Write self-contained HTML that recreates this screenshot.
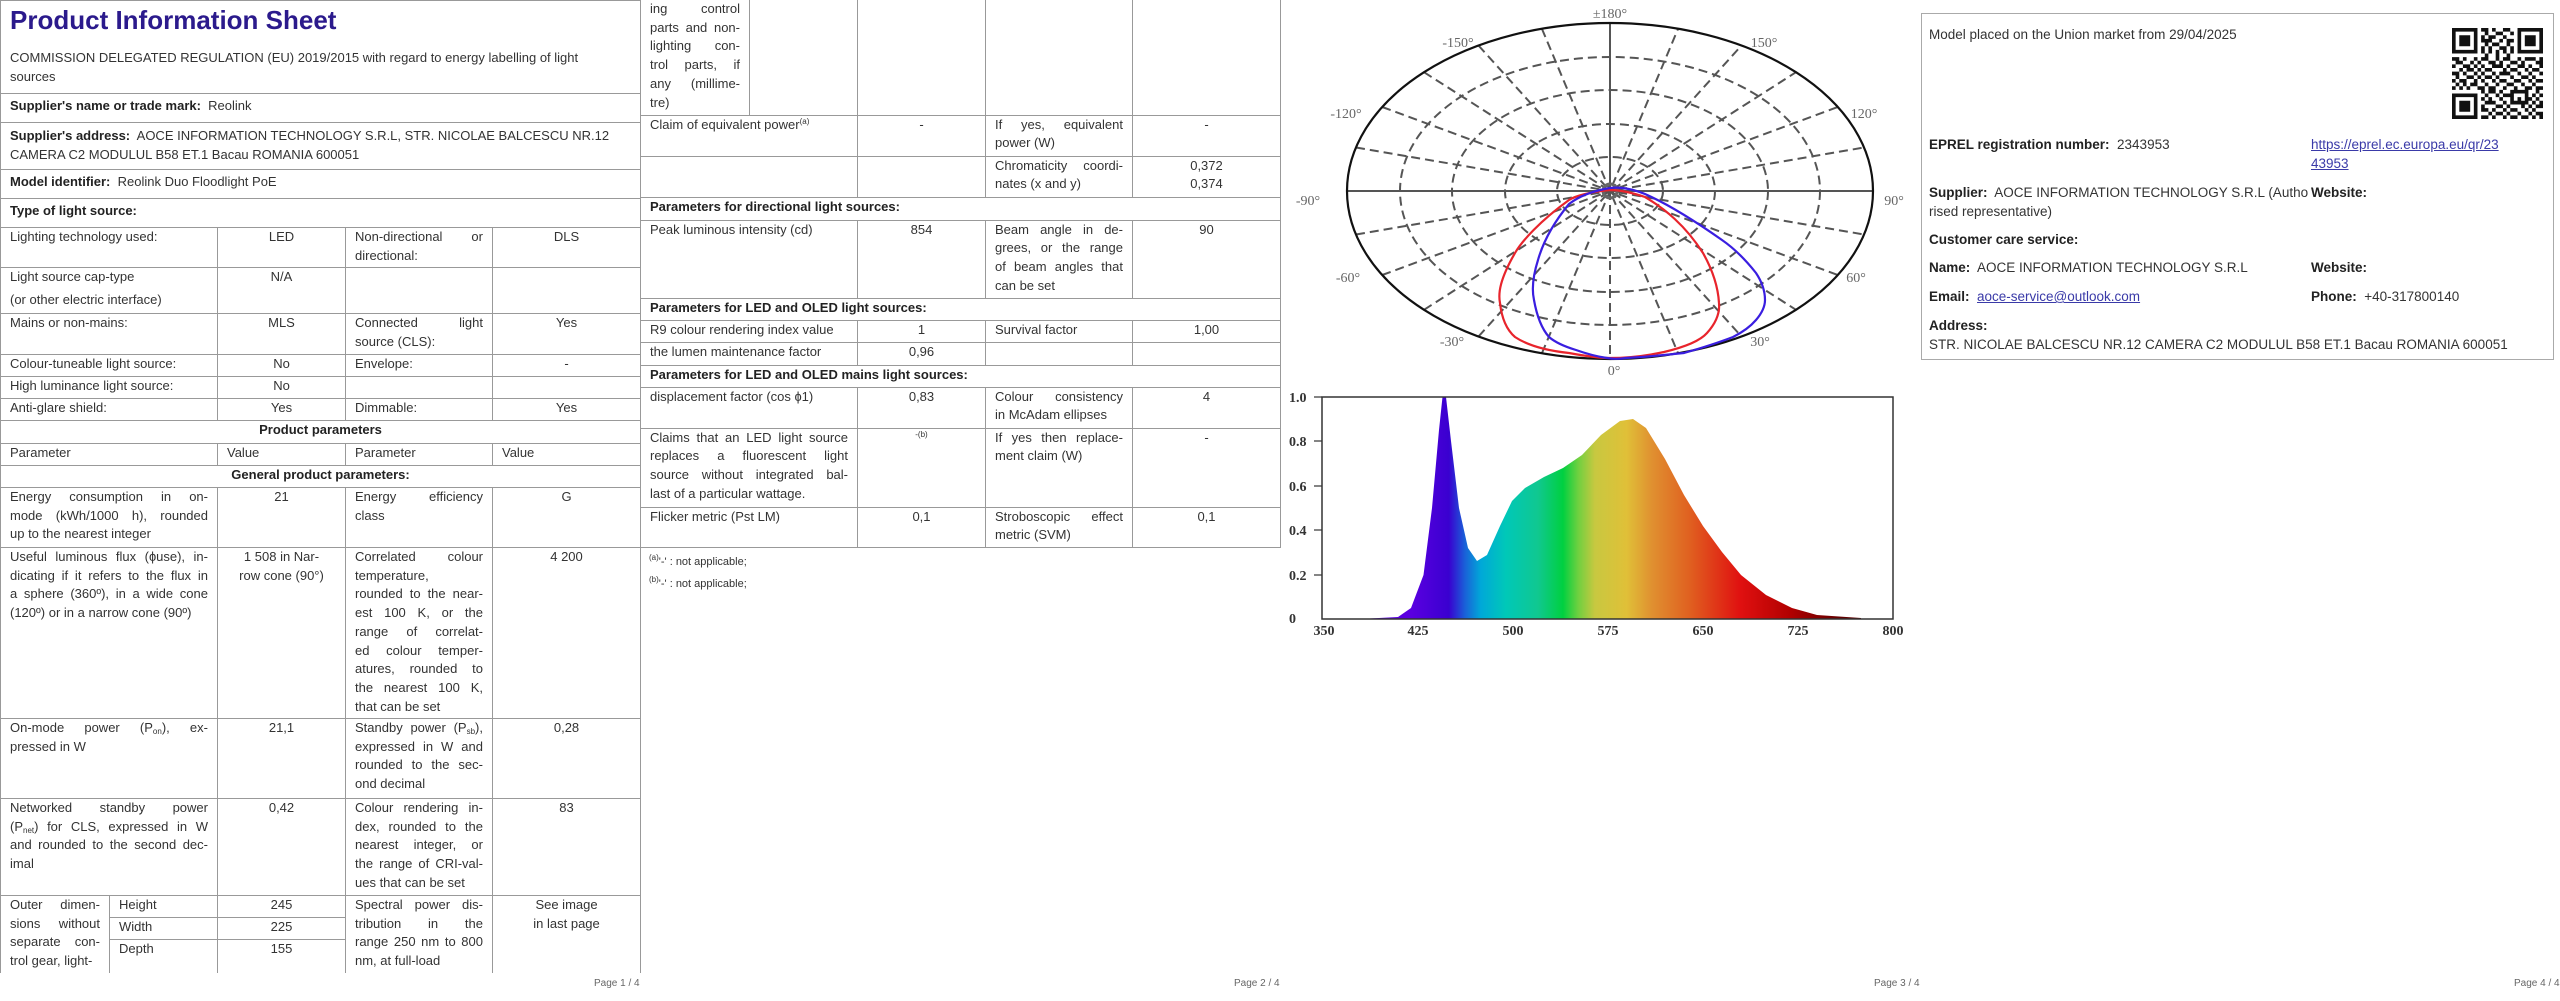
<!DOCTYPE html>
<html><head><meta charset="utf-8">
<style>
*{margin:0;padding:0;box-sizing:border-box}
body{width:2560px;height:1001px;background:#fff;position:relative;overflow:hidden;font-family:"Liberation Sans",sans-serif;color:#333;font-size:13px}
table{position:absolute;border-collapse:collapse;table-layout:fixed;font-size:13px;line-height:18.7px}
td{border:1px solid #999;vertical-align:top;padding:0 9px;overflow:hidden}
.c{text-align:center}
.j{text-align:justify;text-align-last:justify}
b{color:#222}
.h{text-align:center;font-weight:bold;color:#222}
sub{font-size:8px;vertical-align:-2px;line-height:0}
sup{font-size:8px;vertical-align:5px;line-height:0}
.pn{position:absolute;top:978px;font-size:10px;color:#666}
.p4{position:absolute;font-size:13.5px;line-height:19px;color:#333;white-space:nowrap}
a{color:#3a3aa8;text-decoration:underline}
</style></head><body>

<!-- PAGE 1 -->
<table style="left:0;top:0;width:640px">
<colgroup><col style="width:109px"><col style="width:108px"><col style="width:128px"><col style="width:147px"><col style="width:148px"></colgroup>
<tr style="height:93px"><td colspan="5"><div style="font-size:26px;font-weight:bold;color:#2b1a8c;line-height:34px;padding-top:2px">Product Information Sheet</div><div style="padding-top:11px;line-height:19px">COMMISSION DELEGATED REGULATION (EU) 2019/2015 with regard to energy labelling of light<br>sources</div></td></tr>
<tr style="height:29px"><td colspan="5" style="padding-top:3px"><b>Supplier's name or trade mark:</b>&nbsp; Reolink</td></tr>
<tr style="height:47px"><td colspan="5" style="padding-top:3px;line-height:19px"><b>Supplier's address:</b>&nbsp; AOCE INFORMATION TECHNOLOGY S.R.L, STR. NICOLAE BALCESCU NR.12<br>CAMERA C2 MODULUL B58 ET.1 Bacau ROMANIA 600051</td></tr>
<tr style="height:29px"><td colspan="5" style="padding-top:3px"><b>Model identifier:</b>&nbsp; Reolink Duo Floodlight PoE</td></tr>
<tr style="height:29px"><td colspan="5" style="padding-top:3px"><b>Type of light source:</b></td></tr>
<tr style="height:40px"><td colspan="2">Lighting technology used:</td><td class="c">LED</td><td><div class="j">Non-directional or</div>directional:</td><td class="c">DLS</td></tr>
<tr style="height:46px"><td colspan="2">Light source cap-type<div style="margin-top:4px">(or other electric interface)</div></td><td class="c">N/A</td><td></td><td></td></tr>
<tr style="height:41px"><td colspan="2">Mains or non-mains:</td><td class="c">MLS</td><td><div class="j">Connected light</div>source (CLS):</td><td class="c">Yes</td></tr>
<tr style="height:22px"><td colspan="2">Colour-tuneable light source:</td><td class="c">No</td><td>Envelope:</td><td class="c">-</td></tr>
<tr style="height:22px"><td colspan="2">High luminance light source:</td><td class="c">No</td><td></td><td></td></tr>
<tr style="height:22px"><td colspan="2">Anti-glare shield:</td><td class="c">Yes</td><td>Dimmable:</td><td class="c">Yes</td></tr>
<tr style="height:23px"><td colspan="5" class="h">Product parameters</td></tr>
<tr style="height:22px"><td colspan="2">Parameter</td><td>Value</td><td>Parameter</td><td>Value</td></tr>
<tr style="height:22px"><td colspan="5" class="h">General product parameters:</td></tr>
<tr style="height:60px"><td colspan="2"><div class="j">Energy consumption in on-</div><div class="j">mode (kWh/1000 h), rounded</div>up to the nearest integer</td><td class="c">21</td><td><div class="j">Energy efficiency</div>class</td><td class="c">G</td></tr>
<tr style="height:171px"><td colspan="2"><div class="j">Useful luminous flux (ɸuse), in-</div><div class="j">dicating if it refers to the flux in</div><div class="j">a sphere (360º), in a wide cone</div>(120º) or in a narrow cone (90º)</td><td class="c">1 508 in Nar-<br>row cone (90°)</td><td><div class="j">Correlated colour</div>temperature,<div class="j">rounded to the near-</div><div class="j">est 100 K, or the</div><div class="j">range of correlat-</div><div class="j">ed colour temper-</div><div class="j">atures, rounded to</div><div class="j">the nearest 100 K,</div>that can be set</td><td class="c">4 200</td></tr>
<tr style="height:80px"><td colspan="2"><div class="j">On-mode power (P<sub>on</sub>), ex-</div>pressed in W</td><td class="c">21,1</td><td><div class="j">Standby power (P<sub>sb</sub>),</div><div class="j">expressed in W and</div><div class="j">rounded to the sec-</div>ond decimal</td><td class="c">0,28</td></tr>
<tr style="height:97px"><td colspan="2"><div class="j">Networked standby power</div><div class="j">(P<sub>net</sub>) for CLS, expressed in W</div><div class="j">and rounded to the second dec-</div>imal</td><td class="c">0,42</td><td><div class="j">Colour rendering in-</div><div class="j">dex, rounded to the</div><div class="j">nearest integer, or</div><div class="j">the range of CRI-val-</div>ues that can be set</td><td class="c">83</td></tr>
<tr style="height:22px"><td rowspan="3" style="border-bottom:none"><div class="j">Outer dimen-</div><div class="j">sions without</div><div class="j">separate con-</div>trol gear, light-</td><td>Height</td><td class="c">245</td><td rowspan="3" style="border-bottom:none"><div class="j">Spectral power dis-</div><div class="j">tribution in the</div><div class="j">range 250 nm to 800</div>nm, at full-load</td><td rowspan="3" class="c" style="border-bottom:none">See image<br>in last page</td></tr>
<tr style="height:22px"><td>Width</td><td class="c">225</td></tr>
<tr style="height:33px"><td style="border-bottom:none">Depth</td><td class="c" style="border-bottom:none">155</td></tr>
</table>
<div class="pn" style="left:594px">Page 1 / 4</div>

<!-- PAGE 2 -->
<table style="left:640px;top:0;width:640px">
<colgroup><col style="width:109px"><col style="width:108px"><col style="width:128px"><col style="width:147px"><col style="width:148px"></colgroup>
<tr style="height:115px"><td style="border-top:none"><div class="j">ing control</div><div class="j">parts and non-</div><div class="j">lighting con-</div><div class="j">trol parts, if</div><div class="j">any (millime-</div>tre)</td><td style="border-top:none"></td><td style="border-top:none"></td><td style="border-top:none"></td><td style="border-top:none"></td></tr>
<tr style="height:41px"><td colspan="2">Claim of equivalent power<sup>(a)</sup></td><td class="c">-</td><td><div class="j">If yes, equivalent</div>power (W)</td><td class="c">-</td></tr>
<tr style="height:41px"><td colspan="2"></td><td></td><td><div class="j">Chromaticity coordi-</div>nates (x and y)</td><td class="c">0,372<br>0,374</td></tr>
<tr style="height:23px"><td colspan="5"><b>Parameters for directional light sources:</b></td></tr>
<tr style="height:78px"><td colspan="2">Peak luminous intensity (cd)</td><td class="c">854</td><td><div class="j">Beam angle in de-</div><div class="j">grees, or the range</div><div class="j">of beam angles that</div>can be set</td><td class="c">90</td></tr>
<tr style="height:22px"><td colspan="5"><b>Parameters for LED and OLED light sources:</b></td></tr>
<tr style="height:22px"><td colspan="2">R9 colour rendering index value</td><td class="c">1</td><td>Survival factor</td><td class="c">1,00</td></tr>
<tr style="height:23px"><td colspan="2">the lumen maintenance factor</td><td class="c">0,96</td><td></td><td></td></tr>
<tr style="height:22px"><td colspan="5"><b>Parameters for LED and OLED mains light sources:</b></td></tr>
<tr style="height:41px"><td colspan="2">displacement factor (cos ɸ1)</td><td class="c">0,83</td><td><div class="j">Colour consistency</div>in McAdam ellipses</td><td class="c">4</td></tr>
<tr style="height:79px"><td colspan="2"><div class="j">Claims that an LED light source</div><div class="j">replaces a fluorescent light</div><div class="j">source without integrated bal-</div>last of a particular wattage.</td><td class="c"><sup>-(b)</sup></td><td><div class="j">If yes then replace-</div>ment claim (W)</td><td class="c">-</td></tr>
<tr style="height:40px"><td colspan="2">Flicker metric (Pst LM)</td><td class="c">0,1</td><td><div class="j">Stroboscopic effect</div>metric (SVM)</td><td class="c">0,1</td></tr>
</table>
<div style="position:absolute;left:649px;top:551px;font-size:11px;line-height:22px;color:#333"><sup>(a)</sup>'-' : not applicable;<br><sup>(b)</sup>'-' : not applicable;</div>
<div class="pn" style="left:1234px">Page 2 / 4</div>

<!-- PAGE 3 -->
<svg style="position:absolute;left:0;top:0" width="2560" height="1001">
<g transform="translate(1610,191)" fill="none">
<g stroke="#555" stroke-width="2" stroke-dasharray="9 5">
<ellipse rx="210" ry="134"/><ellipse rx="158" ry="101"/><ellipse rx="105" ry="67"/><ellipse rx="53" ry="34"/>
<line x1="-68.1" y1="-162.3" x2="68.1" y2="162.3"/><line x1="-68.1" y1="162.3" x2="68.1" y2="-162.3"/>
<line x1="-131.5" y1="-145.5" x2="131.5" y2="145.5"/><line x1="-131.5" y1="145.5" x2="131.5" y2="-145.5"/>
<line x1="-186" y1="-118.8" x2="186" y2="118.8"/><line x1="-186" y1="118.8" x2="186" y2="-118.8"/>
<line x1="-227.8" y1="-84" x2="227.8" y2="84"/><line x1="-227.8" y1="84" x2="227.8" y2="-84"/>
<line x1="-254" y1="-43.5" x2="254" y2="43.5"/><line x1="-254" y1="43.5" x2="254" y2="-43.5"/>
<line x1="0" y1="0" x2="0" y2="168"/>
</g>
<line x1="0" y1="-168" x2="0" y2="0" stroke="#555" stroke-width="2"/>
<line x1="-263" y1="0" x2="263" y2="0" stroke="#555" stroke-width="2"/>
<circle r="7" stroke="#666" stroke-width="3"/>
<ellipse rx="263" ry="168" stroke="#111" stroke-width="2.2"/>
<path d="M0,-1 C-20,1 -35,5 -41,9 C-70,30 -88,50 -95,62 C-110,88 -112,102 -110,112 C-108,130 -102,140 -95,146 C-80,156 -60,160 -41,162 C-25,165 -10,167 0,167 C20,167 40,164 54,161 C75,156 90,150 97,142 C106,132 110,122 109,112 C108,95 102,78 93,62 C75,34 55,18 35,6 C20,1 10,-1 0,-1Z" stroke="#e8242c" stroke-width="2.2"/>
<path d="M0,-3 C-18,0 -32,6 -41,13 C-60,36 -68,55 -72,69 C-78,88 -78,100 -76,109 C-73,126 -68,138 -61,146 C-54,152 -44,156 -34,159 C-20,164 -10,166 -3,167 C3,168 10,168 16,167 C35,166 55,164 74,162 C95,156 110,151 123,146 C133,141 140,136 146,129 C152,122 155,116 155,109 C155,100 152,91 146,82 C135,68 125,58 112,49 C85,30 60,14 35,3 C20,-3 8,-4 0,-3Z" stroke="#3a1ee0" stroke-width="2.2"/>
</g>
<g font-family="Liberation Serif,serif" font-size="14" fill="#666" text-anchor="middle">
<text x="1610" y="18">±180°</text>
<text x="1458" y="47">-150°</text><text x="1764" y="47">150°</text>
<text x="1346" y="118">-120°</text><text x="1864" y="118">120°</text>
<text x="1308" y="205">-90°</text><text x="1894" y="205">90°</text>
<text x="1348" y="282">-60°</text><text x="1856" y="282">60°</text>
<text x="1452" y="346">-30°</text><text x="1760" y="346">30°</text>
<text x="1614" y="375">0°</text>
</g>
<defs><linearGradient id="sp" gradientUnits="userSpaceOnUse" x1="1322" y1="0" x2="1893" y2="0">
<stop offset="0.156" stop-color="#5a00e0"/><stop offset="0.222" stop-color="#3a00d0"/><stop offset="0.25" stop-color="#1a60d8"/><stop offset="0.278" stop-color="#00a8d8"/><stop offset="0.322" stop-color="#00c8b8"/><stop offset="0.378" stop-color="#10c890"/><stop offset="0.422" stop-color="#00d040"/><stop offset="0.449" stop-color="#70d040"/><stop offset="0.478" stop-color="#c8c840"/><stop offset="0.533" stop-color="#e0c038"/><stop offset="0.578" stop-color="#e09030"/><stop offset="0.644" stop-color="#e06020"/><stop offset="0.733" stop-color="#e01010"/><stop offset="0.822" stop-color="#b00000"/><stop offset="0.911" stop-color="#600000"/></linearGradient></defs>
<path fill="url(#sp)" d="M1360,619 L1398,617 1411,608 1423.5,575 1432,508 1439,430 1442.5,397 1446,397 1451,441 1459,508 1468,548 1477,561 1487,555 1500,526 1512,501 1525,488 1544,477 1563,468 1582,455 1601,435 1620,421 1633,419 1646,428 1665,459 1684,495 1703,526 1722,552 1741,575 1766,595 1792,608 1817,615 1861,618 1861,619Z"/>
<rect x="1322" y="397" width="571" height="222" fill="none" stroke="#333" stroke-width="1.5"/>
<g stroke="#333" stroke-width="1.2"><line x1="1314" y1="397" x2="1322" y2="397"/><line x1="1314" y1="441" x2="1322" y2="441"/><line x1="1314" y1="486" x2="1322" y2="486"/><line x1="1314" y1="530" x2="1322" y2="530"/><line x1="1314" y1="575" x2="1322" y2="575"/></g>
<g font-family="Liberation Serif,serif" font-size="14" font-weight="bold" fill="#333">
<text x="1289" y="402">1.0</text><text x="1289" y="446">0.8</text><text x="1289" y="491">0.6</text><text x="1289" y="535">0.4</text><text x="1289" y="580">0.2</text><text x="1289" y="623">0</text>
<g text-anchor="middle"><text x="1324" y="635">350</text><text x="1418" y="635">425</text><text x="1513" y="635">500</text><text x="1608" y="635">575</text><text x="1703" y="635">650</text><text x="1798" y="635">725</text><text x="1893" y="635">800</text></g>
</g>
<!-- QR -->
<g transform="translate(2452,28) scale(3.64)" fill="#111">
<path fill-rule="evenodd" d="M0,0h7v7h-7zM1,1v5h5v-5zM2,2h3v3h-3zM18,0h7v7h-7zM19,1v5h5v-5zM20,2h3v3h-3zM0,18h7v7h-7zM1,19v5h5v-5zM2,20h3v3h-3z"/>
<path d="M8,0h2v1h-2zM11,0h1v1h-1zM14,0h2v1h-2zM9,1h1v1h-1zM12,1h2v1h-2zM16,1h1v1h-1zM8,2h1v1h-1zM10,2h2v1h-2zM14,2h1v1h-1zM8,3h3v1h-3zM13,3h1v1h-1zM15,3h2v1h-2zM9,4h1v1h-1zM11,4h2v1h-2zM15,4h1v1h-1zM8,5h1v1h-1zM10,5h1v1h-1zM13,5h2v1h-2zM16,5h1v1h-1zM8,6h1v1h-1zM10,6h1v1h-1zM12,6h1v1h-1zM14,6h1v1h-1zM16,6h1v1h-1zM9,7h1v1h-1zM12,7h1v1h-1zM15,7h1v1h-1z
M0,8h2v1h-2zM3,8h1v1h-1zM6,8h1v1h-1zM8,8h2v1h-2zM12,8h1v1h-1zM14,8h2v1h-2zM18,8h1v1h-1zM20,8h3v1h-3zM24,8h1v1h-1z
M1,9h2v1h-2zM5,9h1v1h-1zM7,9h1v1h-1zM10,9h2v1h-2zM13,9h1v1h-1zM16,9h2v1h-2zM19,9h1v1h-1zM23,9h2v1h-2z
M0,10h1v1h-1zM3,10h2v1h-2zM6,10h1v1h-1zM8,10h1v1h-1zM11,10h3v1h-3zM15,10h1v1h-1zM18,10h2v1h-2zM21,10h1v1h-1zM24,10h1v1h-1z
M2,11h1v1h-1zM4,11h2v1h-2zM7,11h1v1h-1zM9,11h2v1h-2zM14,11h1v1h-1zM16,11h2v1h-2zM20,11h1v1h-1zM22,11h2v1h-2z
M0,12h2v1h-2zM3,12h1v1h-1zM6,12h1v1h-1zM8,12h1v1h-1zM11,12h1v1h-1zM13,12h3v1h-3zM18,12h1v1h-1zM21,12h1v1h-1zM24,12h1v1h-1z
M1,13h1v1h-1zM4,13h2v1h-2zM7,13h1v1h-1zM9,13h2v1h-2zM12,13h1v1h-1zM16,13h1v1h-1zM19,13h2v1h-2zM22,13h1v1h-1z
M0,14h1v1h-1zM2,14h2v1h-2zM6,14h1v1h-1zM8,14h1v1h-1zM11,14h1v1h-1zM13,14h2v1h-2zM17,14h2v1h-2zM21,14h1v1h-1zM23,14h2v1h-2z
M1,15h1v1h-1zM3,15h1v1h-1zM5,15h2v1h-2zM9,15h1v1h-1zM12,15h1v1h-1zM15,15h2v1h-2zM19,15h1v1h-1zM22,15h1v1h-1z
M0,16h1v1h-1zM2,16h1v1h-1zM4,16h1v1h-1zM7,16h2v1h-2zM10,16h2v1h-2zM14,16h1v1h-1zM17,16h1v1h-1zM20,16h2v1h-2zM23,16h2v1h-2z
M8,17h1v1h-1zM10,17h2v1h-2zM13,17h1v1h-1zM16,17h5v1h-5zM23,17h1v1h-1z
M9,18h1v1h-1zM12,18h1v1h-1zM14,18h3v1h-3zM20,18h1v1h-1zM22,18h1v1h-1zM24,18h1v1h-1z
M8,19h1v1h-1zM10,19h1v1h-1zM13,19h1v1h-1zM16,19h1v1h-1zM18,19h1v1h-1zM20,19h2v1h-2zM23,19h1v1h-1z
M9,20h3v1h-3zM14,20h1v1h-1zM16,20h5v1h-5zM22,20h1v1h-1zM24,20h1v1h-1z
M8,21h1v1h-1zM12,21h2v1h-2zM15,21h1v1h-1zM19,21h1v1h-1zM21,21h1v1h-1zM23,21h2v1h-2z
M8,22h2v1h-2zM11,22h1v1h-1zM14,22h1v1h-1zM16,22h2v1h-2zM20,22h1v1h-1zM22,22h1v1h-1z
M10,23h1v1h-1zM12,23h2v1h-2zM15,23h1v1h-1zM18,23h1v1h-1zM21,23h1v1h-1zM23,23h2v1h-2z
M8,24h2v1h-2zM11,24h1v1h-1zM14,24h1v1h-1zM16,24h2v1h-2zM19,24h2v1h-2zM22,24h1v1h-1zM24,24h1v1h-1z"/>
</g>
</svg>
<div class="pn" style="left:1874px">Page 3 / 4</div>

<!-- PAGE 4 -->
<div style="position:absolute;left:1921px;top:13px;width:633px;height:347px;border:1px solid #aaa"></div>
<div class="p4" style="left:1929px;top:25px">Model placed on the Union market from 29/04/2025</div>
<div class="p4" style="left:1929px;top:135px"><b>EPREL registration number:</b>&nbsp; 2343953</div>
<div class="p4" style="left:2311px;top:135px"><a>https://eprel.ec.europa.eu/qr/23</a><br><a>43953</a></div>
<div class="p4" style="left:1929px;top:183px"><b>Supplier:</b>&nbsp; AOCE INFORMATION TECHNOLOGY S.R.L (Autho<br>rised representative)</div>
<div class="p4" style="left:2311px;top:183px"><b>Website:</b></div>
<div class="p4" style="left:1929px;top:230px"><b>Customer care service:</b></div>
<div class="p4" style="left:1929px;top:258px"><b>Name:</b>&nbsp; AOCE INFORMATION TECHNOLOGY S.R.L</div>
<div class="p4" style="left:2311px;top:258px"><b>Website:</b></div>
<div class="p4" style="left:1929px;top:287px"><b>Email:</b>&nbsp; <a>aoce-service@outlook.com</a></div>
<div class="p4" style="left:2311px;top:287px"><b>Phone:</b>&nbsp; +40-317800140</div>
<div class="p4" style="left:1929px;top:316px"><b>Address:</b><br>STR. NICOLAE BALCESCU NR.12 CAMERA C2 MODULUL B58 ET.1 Bacau ROMANIA 600051</div>
<div class="pn" style="left:2514px">Page 4 / 4</div>
</body></html>
